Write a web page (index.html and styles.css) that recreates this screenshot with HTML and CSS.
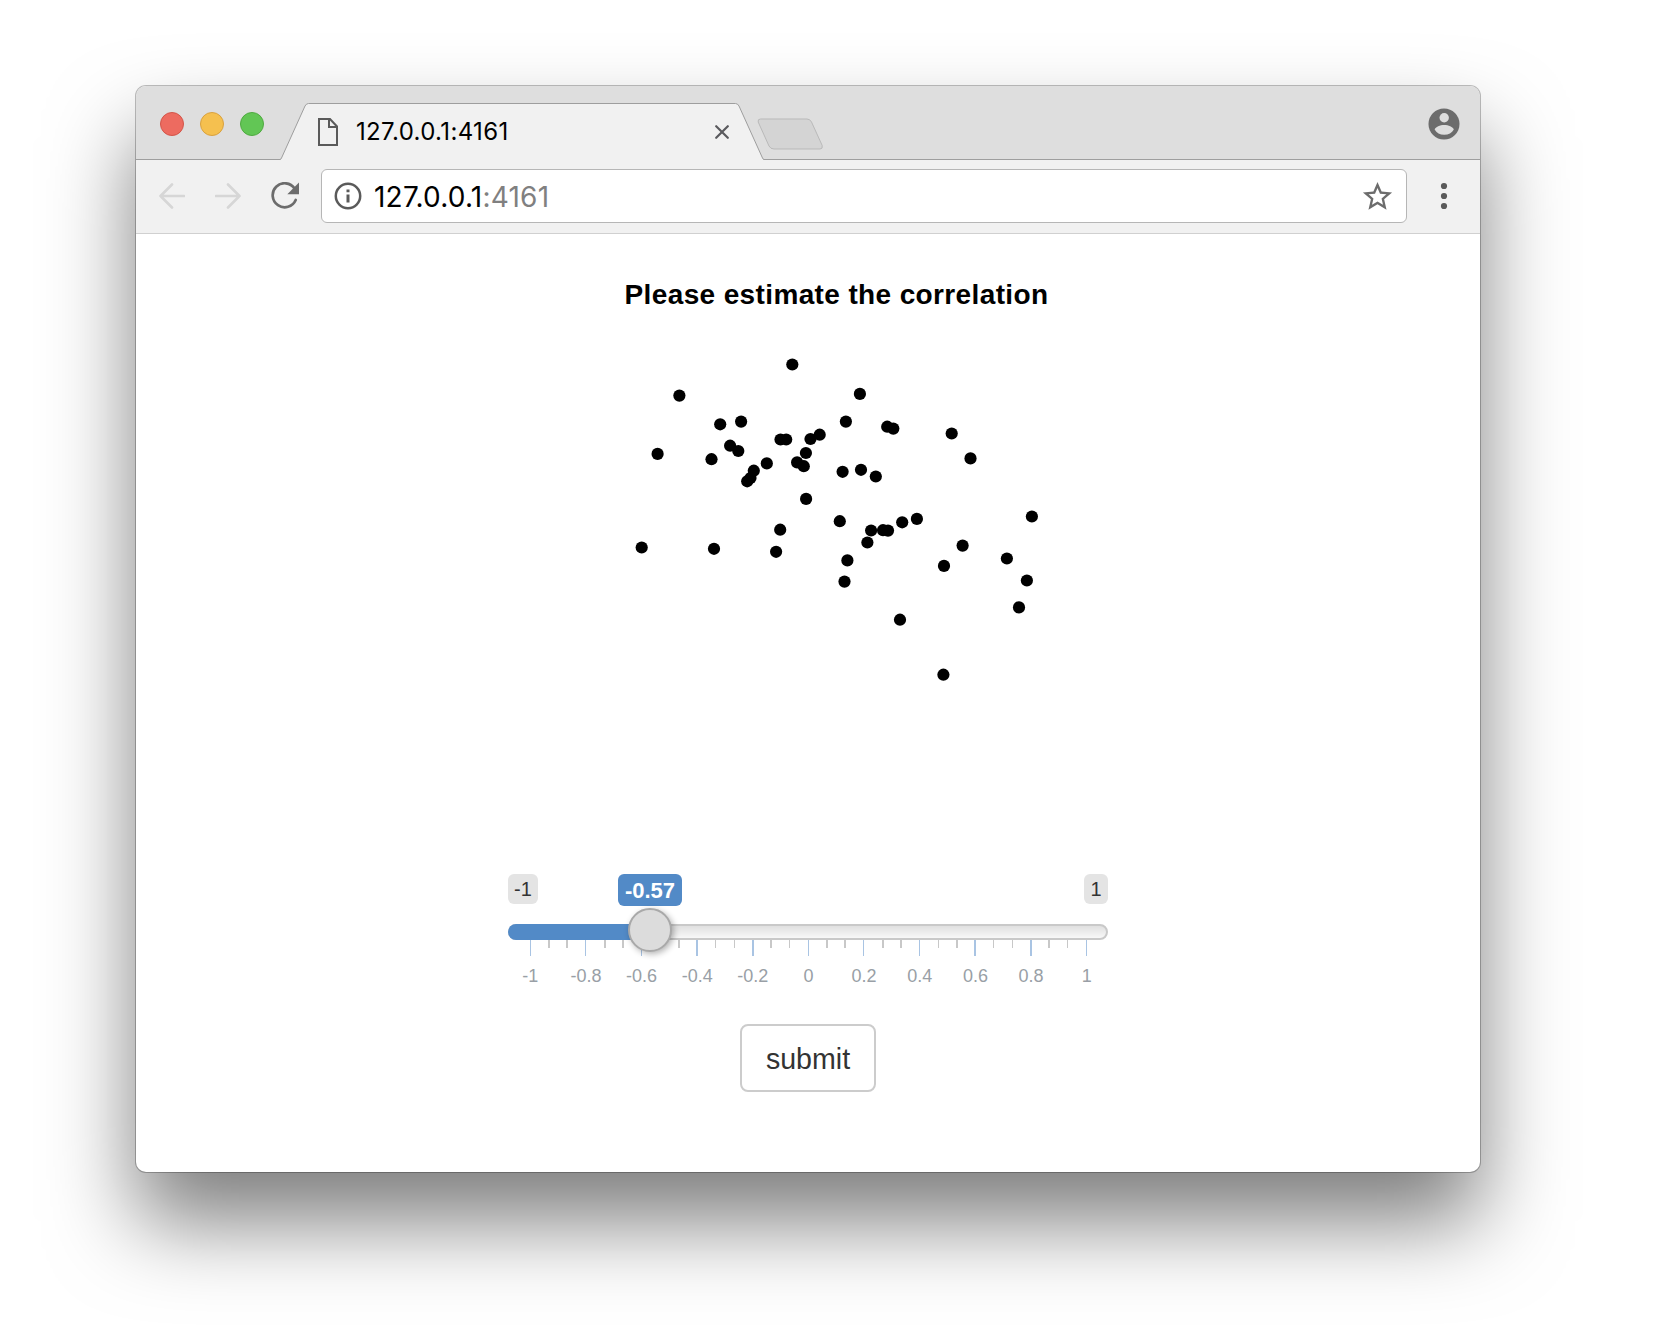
FILE: index.html
```html
<!DOCTYPE html>
<html lang="en">
<head>
<meta charset="utf-8">
<title>127.0.0.1:4161</title>
<link rel="stylesheet" href="styles.css">
</head>
<body>
<div class="window">
  <header class="tabstrip">
    <div class="lights"><span class="light red"></span><span class="light yellow"></span><span class="light green"></span></div>
    <div class="tab">
      <svg class="tab-shape" width="484" height="57" viewBox="0 0 484 57"><path d="M0 57 Q.8 56.5 1.5 55 L25 3 Q26.3.5 28.5.5 H455.500 Q457.700.5 459 3 L482.500 55 Q483.200 56.500 484 57Z" fill="#f1f1f1"/><path d="M0 56.500 Q.8 56.500 1.500 55 L25 3 Q26.300.5 28.500.5 H455.500 Q457.700.5 459 3 L482.500 55 Q483.200 56.500 484 56.500" fill="none" stroke="#9e9e9e"/></svg>
      <svg class="page-icon" width="20" height="28" viewBox="0 0 20 28" fill="none" stroke="#5a5a5a" stroke-width="2"><path d="M1 1H12L19 8.500V27H1Z"/><path d="M11 1V9H19"/></svg>
      <span class="tab-title">127.0.0.1:4161</span>
      <svg class="close" width="14" height="14" viewBox="0 0 14 14" stroke="#5a5a5e" stroke-width="2.200" stroke-linecap="round"><path d="M1.200 1.200 12.800 12.800M12.800 1.200 1.200 12.800"/></svg>
    </div>
    <svg class="newtab" width="66" height="32" viewBox="0 0 66 32"><path d="M3.500 1H50Q53 1 54.500 4L65.200 27.500Q66 31 63 31H17Q13.500 31 12 28L1.200 4Q.5 1 3.500 1Z" fill="#d4d4d4" stroke="#b9b9b9"/></svg>
    <svg class="profile" width="32" height="32" viewBox="0 0 32 32"><circle cx="16" cy="16" r="15.500" fill="#6c6c6c"/><circle cx="16.200" cy="9.800" r="4.700" fill="#dedede"/><path d="M6.600 21.500C7.500 18.700 12 16.900 16.200 16.900S25 18.700 25.800 21.500C24 25 20.500 26.800 16.200 26.800S8.500 25 6.600 21.500Z" fill="#dedede"/></svg>
  </header>
  <nav class="toolbar">
    <svg class="arrow" width="26" height="26" viewBox="0 0 26 26"><path d="M13 1.500 1.500 13 13 24.500M1.500 13H25"/></svg>
    <svg class="arrow forward" width="26" height="26" viewBox="0 0 26 26"><path d="M13 1.500 24.500 13 13 24.500M24.500 13H1"/></svg>
    <svg class="reload" width="28" height="28" viewBox="0 0 28 28"><path d="M23.600 6.500A12 12 0 1 0 24.700 18" fill="none" stroke="#6c6c6c" stroke-width="2.700" stroke-linecap="round"/><path d="M28 .5V12.200H16.300Z" fill="#6c6c6c"/></svg>
    <div class="omnibox">
      <svg class="info" width="28" height="28" viewBox="0 0 28 28"><circle cx="14" cy="14" r="12.200" fill="none" stroke="#5a5a5a" stroke-width="2.500"/><path d="M12.500 12.500H15.500V20.500H12.500ZM12.500 7.500H15.500V10.300H12.500Z" fill="#5a5a5a"/></svg>
      <span class="url">127.0.0.1<span class="port">:4161</span></span>
      <svg class="star" width="35" height="35" viewBox="0 0 24 24"><path fill="#6c6c6c" d="M22 9.240l-7.190-.62L12 2 9.190 8.630 2 9.240l5.460 4.730L5.820 21 12 17.270 18.180 21l-1.630-7.030L22 9.240zM12 15.400l-3.760 2.270 1-4.280-3.320-2.880 4.380-.38L12 6.100l1.710 4.040 4.380.38-3.320 2.880 1 4.280L12 15.400z"/></svg>
    </div>
    <svg class="menu" width="8" height="28" viewBox="0 0 8 28" fill="#5a5a5a"><circle cx="4" cy="4" r="3.100"/><circle cx="4" cy="14" r="3.100"/><circle cx="4" cy="24" r="3.100"/></svg>
  </nav>
  <main class="page">
    <h1 class="heading">Please estimate the correlation</h1>
    <svg class="plot" width="460" height="400" viewBox="600 320 460 400">
      <circle cx="792.300" cy="364.500" r="6.100"/><circle cx="679.400" cy="395.600" r="6.100"/><circle cx="859.900" cy="393.900" r="6.100"/><circle cx="720.200" cy="424.300" r="6.100"/><circle cx="741.100" cy="421.600" r="6.100"/><circle cx="845.900" cy="421.600" r="6.100"/><circle cx="887.200" cy="426.700" r="6.100"/><circle cx="893.300" cy="428.600" r="6.100"/><circle cx="951.700" cy="433.500" r="6.100"/><circle cx="780.500" cy="439.500" r="6.100"/><circle cx="786.200" cy="439.500" r="6.100"/><circle cx="810.500" cy="439" r="6.100"/><circle cx="819.700" cy="434.700" r="6.100"/><circle cx="730.100" cy="445.700" r="6.100"/><circle cx="738.300" cy="451" r="6.100"/><circle cx="657.600" cy="453.900" r="6.100"/><circle cx="711.500" cy="459.200" r="6.100"/><circle cx="805.900" cy="453" r="6.100"/><circle cx="970.500" cy="458.400" r="6.100"/><circle cx="766.800" cy="463.400" r="6.100"/><circle cx="797.100" cy="462.400" r="6.100"/><circle cx="803.800" cy="466.200" r="6.100"/><circle cx="753.800" cy="470.700" r="6.100"/><circle cx="750.500" cy="478" r="6.100"/><circle cx="747.200" cy="481.300" r="6.100"/><circle cx="842.600" cy="471.800" r="6.100"/><circle cx="861" cy="469.800" r="6.100"/><circle cx="875.800" cy="476.500" r="6.100"/><circle cx="806.100" cy="498.900" r="6.100"/>
      <circle cx="839.800" cy="521.200" r="6.100"/><circle cx="780.200" cy="529.700" r="6.100"/><circle cx="641.700" cy="547.500" r="6.100"/><circle cx="714" cy="548.800" r="6.100"/><circle cx="776.100" cy="551.800" r="6.100"/><circle cx="871.100" cy="530.500" r="6.100"/><circle cx="883" cy="530.200" r="6.100"/><circle cx="888" cy="530.600" r="6.100"/><circle cx="902.200" cy="522.300" r="6.100"/><circle cx="916.900" cy="518.900" r="6.100"/><circle cx="867.400" cy="542.500" r="6.100"/><circle cx="847.400" cy="560.400" r="6.100"/><circle cx="844.500" cy="581.600" r="6.100"/><circle cx="1031.900" cy="516.500" r="6.100"/><circle cx="962.600" cy="545.600" r="6.100"/><circle cx="944" cy="565.900" r="6.100"/><circle cx="1006.900" cy="558.500" r="6.100"/><circle cx="1026.900" cy="580.500" r="6.100"/><circle cx="1019" cy="607.400" r="6.100"/><circle cx="900" cy="619.700" r="6.100"/><circle cx="943.400" cy="674.700" r="6.100"/>
    </svg>
    <section class="slider">
      <div class="badges"><span class="badge">-1</span><span class="badge current">-0.57</span><span class="badge last">1</span></div>
      <div class="track"><div class="fill"></div><div class="handle"></div></div>
      <svg class="ticks" width="600" height="16" viewBox="508 0 600 16">
        <path fill="#a9c4e3" d="M530 0h1v16h-1zM585 0h1v16h-1zM641 0h1v16h-1zM696 0h2v16h-2zM752 0h2v16h-2zM808 0h1v16h-1zM863 0h1v16h-1zM919 0h1v16h-1zM974 0h2v16h-2zM1030 0h2v16h-2zM1086 0h1v16h-1z"/>
        <path fill="#c8c8c8" d="M548 0h2v8h-2zM566 0h2v8h-2zM604 0h2v8h-2zM622 0h2v8h-2zM660 0h1v8h-1zM678 0h2v8h-2zM715 0h1v8h-1zM734 0h1v8h-1zM770 0h2v8h-2zM789 0h1v8h-1zM826 0h2v8h-2zM844 0h2v8h-2zM882 0h2v8h-2zM900 0h2v8h-2zM938 0h1v8h-1zM956 0h2v8h-2zM993 0h1v8h-1zM1012 0h1v8h-1zM1048 0h2v8h-2zM1067 0h1v8h-1z"/>
      </svg>
      <div class="labels"><span>-1</span><span>-0.8</span><span>-0.6</span><span>-0.4</span><span>-0.2</span><span>0</span><span>0.2</span><span>0.4</span><span>0.6</span><span>0.8</span><span>1</span></div>
    </section>
    <button class="submit">submit</button>
  </main>
</div>
</body>
</html>
```
FILE: styles.css
```css
* { box-sizing: border-box; }
body { margin: 0; height: 1340px; padding: 86px 0 0 136px; background: #fff; overflow: hidden; font-family: "Liberation Sans", Arial, sans-serif; }
svg { display: block; flex: none; }
.window { width: 1344px; height: 1086px; border-radius: 10px; background: #fff; box-shadow: 0 0 0 1px rgba(0,0,0,.25), 0 50px 86px rgba(0,0,0,.51); }
.tabstrip { display: flex; align-items: flex-end; height: 74px; background: #dedede; border-radius: 10px 10px 0 0; box-shadow: inset 0 -1px #9e9e9e; }
.lights { display: flex; gap: 16px; padding: 0 16px 24px 24px; width: 144px; }
.light { width: 24px; height: 24px; border-radius: 50%; border: 1px solid; }
.red { background: #ed6b60; border-color: #d35549; }
.yellow { background: #f5c04f; border-color: #d9a13f; }
.green { background: #62c655; border-color: #4faa40; }
.tab { position: relative; display: flex; align-items: center; width: 484px; height: 57px; padding: 0 35px 0 38px; }
.tab-shape { position: absolute; left: 0; top: 0; }
.page-icon { position: relative; margin-top: 1px; }
.tab-title { position: relative; margin-left: 18px; font: 24px/30px Inter, sans-serif; letter-spacing: .35px; }
.close { position: relative; margin-left: auto; }
.newtab { margin: 0 0 10px -7px; }
.profile { margin: 0 20px 20px auto; }
.toolbar { display: flex; align-items: center; height: 74px; padding: 0 32px 2px 23px; background: #f1f1f1; border-bottom: 1px solid #d0d0d0; }
.arrow { fill: none; stroke: #d6d6d6; stroke-width: 2.6; stroke-linecap: round; stroke-linejoin: round; }
.forward { margin-left: 30px; }
.reload { margin: 1px 0 0 30px; }
.omnibox { display: flex; align-items: center; width: 1086px; height: 54px; margin-left: 22px; padding: 0 11px 0 12px; border: 1px solid #b6b6b6; border-radius: 6px; background: #fff; }
.info { margin-top: 1px; }
.url { margin: 2px 0 0 12px; font: 28px/34px Inter, sans-serif; letter-spacing: .22px; }
.port { color: #808080; }
.star { margin: 2px 0 0 auto; }
.menu { margin-left: auto; }
.page { display: flex; flex-direction: column; align-items: center; }
.heading { margin: 43px 0 0 57px; height: 43px; font-size: 28px; line-height: 36px; white-space: nowrap; letter-spacing: .37px; }
.plot { margin-left: 44px; }
.slider { width: 600px; margin-top: 154px; }
.badges { display: flex; height: 50px; align-items: flex-start; }
.badge { width: 30px; height: 30px; border-radius: 6px; background: #e4e4e4; color: #333; font-size: 20px; line-height: 30px; text-align: center; }
.current { width: 64px; height: 32px; margin-left: 80px; background: #528ac7; color: #fff; font-size: 22px; font-weight: bold; line-height: 33px; }
.last { width: 24px; margin-left: auto; }
.track { position: relative; z-index: 1; height: 16px; border: 2px solid #c9c9c9; border-radius: 8px; background: linear-gradient(#e0e0e0, #f8f8f8); }
.fill { width: 142px; height: 16px; margin: -2px; border-radius: 8px 0 0 8px; background: #528ac7; }
.handle { position: absolute; left: 118px; top: -18px; width: 44px; height: 44px; border: 2px solid #a9a9a9; border-radius: 50%; background: #dcdcdc; box-shadow: 2px 2px 6px rgba(0,0,0,.3); }
.labels { display: grid; grid-template-columns: repeat(11, 1fr); width: 612px; margin: 9px 0 0 -5.5px; color: #999fa6; font-size: 18px; line-height: 22px; text-align: center; }
.submit { width: 136px; height: 68px; margin-top: 37px; padding: 2px 0 0; border: 2px solid #ccc; border-radius: 8px; background: #fff; color: #333; font: 28.6px "Liberation Sans", Arial, sans-serif; }
```
